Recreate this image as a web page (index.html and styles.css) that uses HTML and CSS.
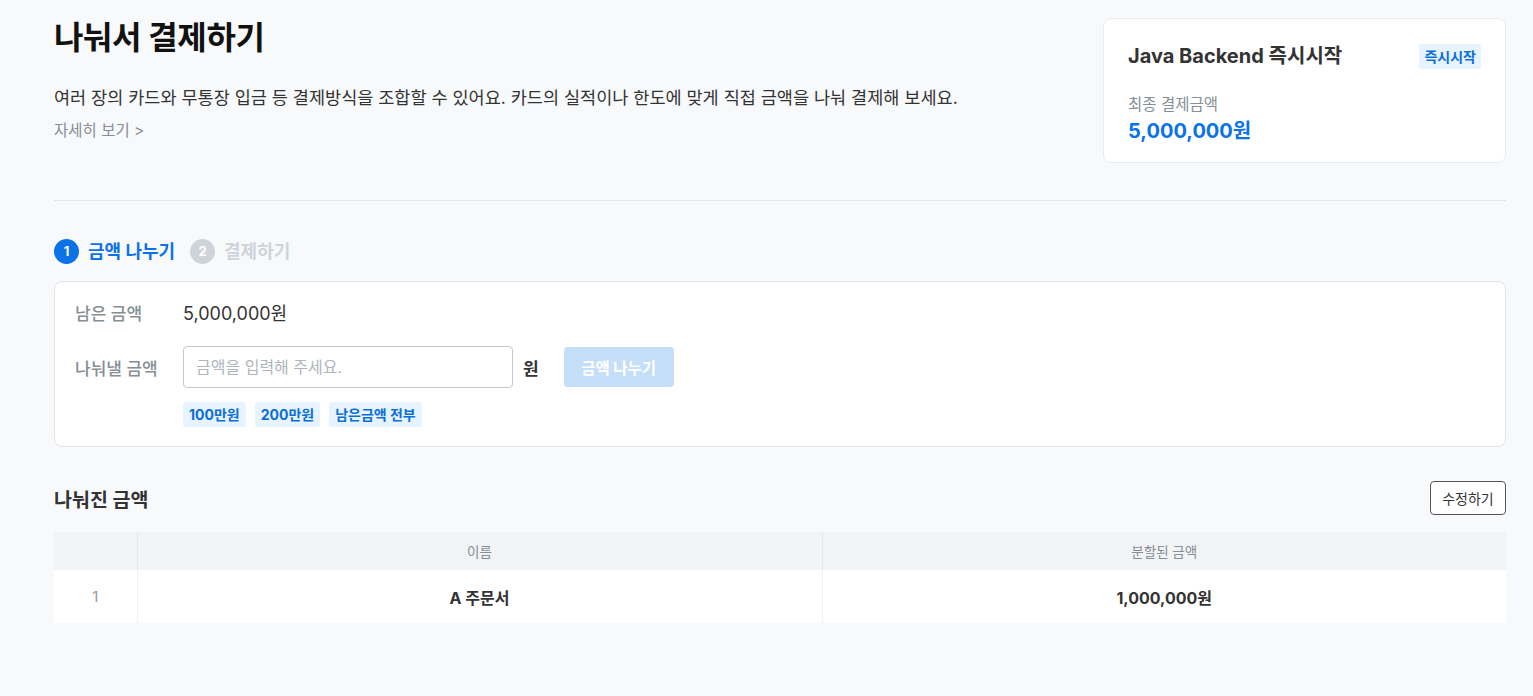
FILE: index.html
```html
<!DOCTYPE html>
<html lang="ko">
<head>
<meta charset="utf-8">
<title>나눠서 결제하기</title>
<link rel="stylesheet" href="styles.css">
</head>
<body>
<div class="page">
  <header class="top">
    <div class="intro">
      <h1 class="title">나눠서 결제하기</h1>
      <p class="desc">여러 장의 카드와 무통장 입금 등 결제방식을 조합할 수 있어요. 카드의 실적이나 한도에 맞게 직접 금액을 나눠 결제해 보세요.</p>
      <a class="more">자세히 보기 &gt;</a>
    </div>
    <aside class="summary">
      <div class="summary-head">
        <span class="product">Java Backend 즉시시작</span>
        <span class="badge">즉시시작</span>
      </div>
      <div class="summary-label">최종 결제금액</div>
      <div class="summary-price">5,000,000원</div>
    </aside>
  </header>

  <hr class="divider">

  <ol class="steps">
    <li class="step active"><span class="num">1</span>금액 나누기</li>
    <li class="step"><span class="num">2</span>결제하기</li>
  </ol>

  <section class="split-card">
    <div class="row">
      <span class="label">남은 금액</span>
      <span class="remain">5,000,000원</span>
    </div>
    <div class="row">
      <span class="label">나눠낼 금액</span>
      <input class="amount" type="text" placeholder="금액을 입력해 주세요.">
      <span class="won">원</span>
      <button class="split-btn">금액 나누기</button>
    </div>
    <div class="chips">
      <span class="chip">100만원</span>
      <span class="chip">200만원</span>
      <span class="chip">남은금액 전부</span>
    </div>
  </section>

  <div class="list-head">
    <h2 class="subtitle">나눠진 금액</h2>
    <button class="edit-btn">수정하기</button>
  </div>

  <table class="result">
    <thead>
      <tr><th class="c-no"></th><th>이름</th><th>분할된 금액</th></tr>
    </thead>
    <tbody>
      <tr><td class="c-no">1</td><td class="strong">A 주문서</td><td class="strong">1,000,000원</td></tr>
    </tbody>
  </table>
</div>
</body>
</html>
```

FILE: styles.css
```css
* { box-sizing: border-box; }
html, body { margin: 0; padding: 0; }
body {
  background: #f8f9fb;
  font-family: Inter, "Noto Sans CJK KR", sans-serif;
  color: #222;
}
.page {
  padding: 18px 27px 40px 54px;
}
.top {
  display: flex;
  justify-content: space-between;
  align-items: flex-start;
}
.title {
  margin: 0;
  font-size: 32px;
  font-weight: 700;
  letter-spacing: -0.4px;
  color: #111;
  line-height: 40px;
}
.desc {
  margin: 27px 0 0;
  font-size: 17.5px;
  line-height: 25px;
  color: #333;
}
.more {
  display: inline-block;
  margin-top: 10px;
  font-size: 15.5px;
  color: #868e96;
  line-height: 22px;
}
.summary {
  width: 403px;
  height: 145px;
  background: #fff;
  border: 1px solid #e9ecef;
  border-radius: 8px;
  padding: 23px 24px 0 24px;
}
.summary-head {
  display: flex;
  justify-content: space-between;
  align-items: center;
}
.product {
  font-size: 20px;
  font-weight: 700;
  color: #333;
  line-height: 28px;
}
.badge {
  background: #e7f3ff;
  color: #0b6fd6;
  font-size: 14px;
  font-weight: 700;
  padding: 3px 5px;
  border-radius: 3px;
  line-height: 19px;
}
.summary-label {
  margin-top: 25px;
  font-size: 15.5px;
  color: #868e96;
  line-height: 20px;
}
.summary-price {
  margin-top: 3px;
  font-size: 20px;
  font-weight: 700;
  color: #0b72e7;
  line-height: 26px;
}
.divider {
  margin: 37px 0 0;
  border: 0;
  border-top: 1px solid #e1e4e8;
}
.steps {
  list-style: none;
  margin: 38px 0 0;
  padding: 0;
  display: flex;
  gap: 15px;
}
.step {
  display: flex;
  align-items: center;
  gap: 9px;
  font-size: 18px;
  font-weight: 700;
  color: #ced4da;
  line-height: 25px;
}
.step .num {
  width: 25px;
  height: 25px;
  border-radius: 50%;
  background: #ced4da;
  color: #fff;
  font-size: 13px;
  display: flex;
  align-items: center;
  justify-content: center;
}
.step.active { color: #0b72e7; }
.step.active .num { background: #0b72e7; }
.split-card {
  margin-top: 17px;
  background: #fff;
  border: 1px solid #e1e4e8;
  border-radius: 8px;
  padding: 17px 20px 19px 20px;
}
.row {
  display: flex;
  align-items: center;
}
.row + .row { margin-top: 21px; }
.label {
  width: 108px;
  font-size: 17px;
  color: #868e96;
  font-weight: 500;
}
.remain {
  font-size: 18px;
  color: #333;
}
.amount {
  width: 330px;
  height: 42px;
  border: 1px solid #c4c8cc;
  border-radius: 4px;
  padding: 0 12px;
  font-family: inherit;
  font-size: 16px;
  color: #333;
  background: #fff;
}
.amount::placeholder { color: #adb5bd; }
.won {
  margin-left: 10px;
  font-size: 17px;
  font-weight: 700;
  color: #333;
}
.split-btn {
  margin-left: 25px;
  width: 110px;
  height: 40px;
  border: 0;
  border-radius: 4px;
  background: #c5defa;
  color: #fff;
  font-family: inherit;
  font-size: 15.5px;
  font-weight: 700;
}
.chips {
  display: flex;
  gap: 9px;
  margin: 14px 0 0 108px;
}
.chip {
  background: #e7f3ff;
  color: #0b6fd6;
  font-size: 14px;
  font-weight: 700;
  padding: 0 6px;
  height: 25px;
  line-height: 25px;
  border-radius: 3px;
}
.list-head {
  margin-top: 34px;
  display: flex;
  justify-content: space-between;
  align-items: center;
}
.subtitle {
  margin: 0;
  font-size: 19.5px;
  font-weight: 700;
  color: #333;
}
.edit-btn {
  height: 34px;
  width: 76px;
  border: 1px solid #555;
  border-radius: 4px;
  background: #fff;
  font-family: inherit;
  font-size: 14px;
  color: #333;
}
.result {
  margin-top: 17px;
  width: 100%;
  border-collapse: collapse;
  font-size: 13.5px;
}
.result th {
  height: 38px;
  background: #f1f3f5;
  color: #868e96;
  font-weight: 400;
  border-left: 1px solid #e4e7ea;
}
.result th:first-child { border-left: 0; }
.result td {
  height: 53px;
  background: #fff;
  text-align: center;
  border-left: 1px solid #f1f3f5;
  font-size: 16px;
  color: #333;
}
.result td:first-child { border-left: 0; }
.result .c-no { width: 83px; color: #999; font-size: 15px; }
.result th.c-no { width: 83px; }
.result .strong { font-weight: 700; }
.result th:nth-child(2), .result td:nth-child(2) { width: 685px; }
```
